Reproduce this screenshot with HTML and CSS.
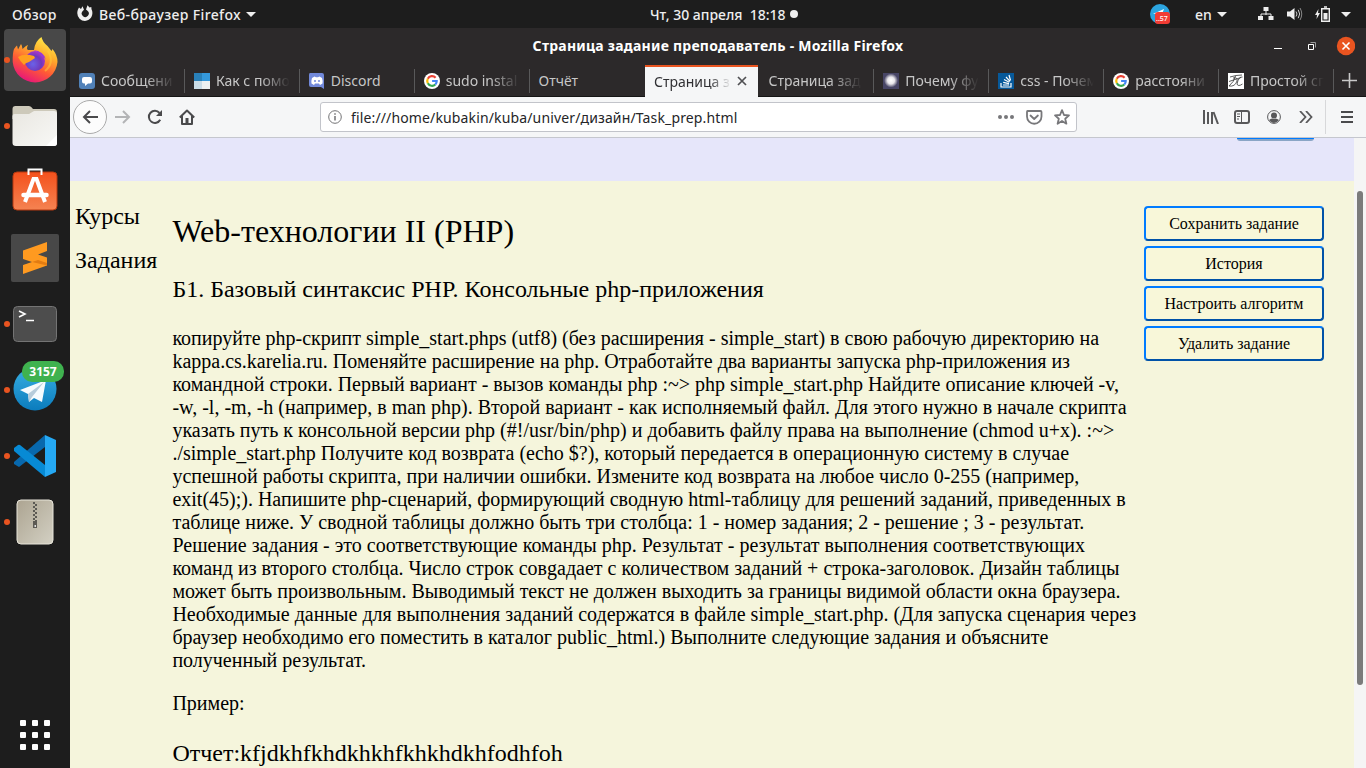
FILE: index.html
```html
<!DOCTYPE html>
<html lang="ru">
<head>
<meta charset="utf-8">
<title>Страница задание преподаватель</title>
<link rel="stylesheet" href="styles.css">
</head>
<body>
<svg width="0" height="0" class="defs">
  <defs>
    <linearGradient id="fox" x1=".8" y1="0" x2=".3" y2="1"><stop offset="0" stop-color="#fff44f"/><stop offset=".35" stop-color="#ffae2b"/><stop offset=".65" stop-color="#ff5a35"/><stop offset="1" stop-color="#e5127e"/></linearGradient>
    <radialGradient id="globe" cx=".4" cy=".65" r=".7"><stop offset="0" stop-color="#6a62e8"/><stop offset=".6" stop-color="#7038bb"/><stop offset="1" stop-color="#b934c9"/></radialGradient>
    <linearGradient id="paper" x1="0" y1="0" x2="1" y2="1"><stop offset="0" stop-color="#e9e7e1"/><stop offset="1" stop-color="#f8f8f6"/></linearGradient>
    <linearGradient id="orange" x1="0" y1="0" x2="0" y2="1"><stop offset="0" stop-color="#f4511c"/><stop offset="1" stop-color="#f58352"/></linearGradient>
    <linearGradient id="tg" x1="0" y1="0" x2="0" y2="1"><stop offset="0" stop-color="#37aee2"/><stop offset="1" stop-color="#0b7cbd"/></linearGradient>
    <linearGradient id="zip" x1="0" y1="0" x2="1" y2="1"><stop offset="0" stop-color="#aca491"/><stop offset="1" stop-color="#d3d0c3"/></linearGradient>
    <radialGradient id="star"><stop offset="0" stop-color="#fff"/><stop offset=".5" stop-color="#e8e6ea"/><stop offset="1" stop-color="#474565"/></radialGradient>
    <symbol id="google" viewBox="0 0 16 16"><circle cx="8" cy="8" r="8" fill="#fff"/><g fill="none" stroke-width="2.2"><path d="M11.6 4.7A4.8 4.8 0 0 0 3.8 5.7" stroke="#ea4335"/><path d="M3.8 5.7a4.8 4.8 0 0 0 0 4.6" stroke="#fbbc05"/><path d="M3.8 10.3a4.8 4.8 0 0 0 7.5 1.2" stroke="#34a853"/><path d="M11.3 11.5A4.7 4.7 0 0 0 12.7 8H8.1" stroke="#4285f4"/></g></symbol>
  </defs>
</svg>
<div class="desktop">
  <header class="topbar">
    <span class="overview">Обзор</span>
    <svg class="fox-mono" width="16" height="16" viewBox="0 0 16 16"><path d="M2 2.500 4 4l1.500-2.700L7 4.800 5.500 6.300a3.500 3.500 0 1 0 5-.5L9 4.500 10.500.2l2 2.200 1.800-.5.2 2.400A8 8 0 0 1 8 16 7.800 7.800 0 0 1 .3 8.300C.2 6 1 4.300 2 2.500z" fill="#eee"/></svg>
    <span class="app">Веб-браузер Firefox</span><i class="tri"></i>
    <span class="clock">Чт, 30 апреля&nbsp; 18:18</span><i class="dot"></i>
    <div class="tray">
      <svg width="22" height="22" viewBox="0 0 22 22"><circle cx="11" cy="11" r="10" fill="#2ca5e0"/><path d="m4 11 11-5-2 5z" fill="#fff"/><rect x="6" y="9" width="15" height="12" rx="3" fill="#f23c34"/><text x="7" y="18" font-size="7" fill="#fff">..57</text></svg>
      <span class="lang">en</span><i class="tri"></i>
      <svg class="net" width="16" height="14" viewBox="0 0 16 14"><path d="M8 4v4M3 10V7h10v3" fill="none" stroke="#eee"/><path d="M5.500 0h5v4h-5zM0 9h5v4H0zM10.500 9h5v4h-5z" fill="#eee"/></svg>
      <svg class="vol" width="16" height="14" viewBox="0 0 16 14"><path d="M0 4.500h3L7.500 1v12L3 9.500H0z" fill="#eee"/><path d="M9 4.500q2 2.500 0 5M11.200 2.800q3 4.200 0 8.400" fill="none" stroke="#ccc"/><path d="M13 1q3.500 6 0 12" fill="none" stroke="#888"/></svg>
      <svg class="bat" width="16" height="16" viewBox="0 0 16 16"><path d="M3.500 3 0 9h2L1.500 13 5 7H3z" fill="#eee"/><path d="M6.700 2.700h7.600v12.600H6.700zM9 1h3" fill="none" stroke="#eee" stroke-width="1.400"/><path d="M8.500 7h4v6.500h-4z" fill="#eee"/></svg>
      <i class="tri last"></i>
    </div>
  </header>

  <aside class="dock">
    <div class="tile active run"><svg width="46" height="48" viewBox="0 0 46 48"><path d="M2 13q2-3 3-3.500l1 4 3-5.500q1 1 1.500 5Q14 9.500 16 9q-2 4 0 5h6Q23 5 29.500 1q1 5 6 9l4 5 1-2q5 6 5 13A22.500 22.500 0 0 1 .7 26Q.5 17 2 13z" fill="url(#fox)"/><circle cx="23" cy="25" r="10" fill="url(#globe)"/><path d="M6 21q6-4 16-1l1 2-6 4q-4 1-5 3-4-4-6-8z" fill="#ffa01f"/><path d="M21 14q11 1 13 10-1-3-5-4 0-3-8-6z" fill="#9a39d4"/><path d="M36 15q7 12-3 20" fill="none" stroke="#ffd03a" stroke-width="2" opacity=".5"/></svg></div>
    <div class="tile run"><svg width="46" height="42" viewBox="0 0 46 42"><path d="M.5 14V4q0-3 3-3H17q2 0 4 3h21q3 0 3 3v8z" fill="#cdc9ba"/><path d="M.5 11q0-2 2-2H17l5-3h20q3 0 3 3v29q0 3-3 3H4q-3.500 0-3.500-3z" fill="url(#paper)"/><path d="m34 41 11-11v8q0 3-3 3z" fill="#fff"/></svg></div>
    <div class="tile store"><svg width="46" height="44" viewBox="0 0 46 44"><rect x="1" y="4" width="44" height="38" rx="4" fill="url(#orange)" stroke="#b63910"/><path d="M16.500 7V1.500h13V7" fill="none" stroke="#fff" stroke-width="2"/><path d="M13 34 21.500 11h3L33 34" fill="none" stroke="#fff" stroke-width="4"/><path d="M11.500 27h23" stroke="#fff" stroke-width="4.500" stroke-linecap="round"/></svg></div>
    <div class="tile"><svg width="48" height="48" viewBox="0 0 48 48"><rect width="48" height="48" rx="2" fill="#484848"/><path d="M12 16.500 36 8v9l-9 3.500 9 3v8L12 40v-9l9-3-9-3z" fill="#ff9a20"/><path d="m21 28 6-2 9 3v2.500z" fill="#e27c12"/></svg></div>
    <div class="tile run"><svg width="44" height="36" viewBox="0 0 44 36"><rect x=".5" y=".5" width="43" height="35" rx="4" fill="#4d4d4d" stroke="#747474"/><path d="m6 5 6 3-6 3M13 14.500h8" fill="none" stroke="#fff" stroke-width="1.600"/></svg></div>
    <div class="tile run"><svg width="44" height="44" viewBox="0 0 44 44"><circle cx="22" cy="21" r="21.500" fill="url(#tg)"/><path d="m7 22 26-10-4 22-8-4-5 4-1-8z" fill="#f6fbfe"/><path d="m15 26 16-12-12 15-3 5z" fill="#b7ccdb"/></svg><b class="badge">3157</b></div>
    <div class="tile run"><svg width="42" height="42" viewBox="0 0 42 42"><path d="M0 27 31 0v12L5 32 0 29z" fill="#0868ad"/><path d="m0 13 4-3q1-.5 2 0l25 20v12L0 16z" fill="#078ad5"/><path d="m31 0 11 5v32l-11 5z" fill="#25a9f4"/></svg></div>
    <div class="tile run"><svg width="38" height="46" viewBox="0 0 38 46"><rect x="1" y="1" width="36" height="44" rx="4" fill="url(#zip)" stroke="#e8e5da"/><path d="M18 3v18" stroke="#5c5a54" stroke-width="2" stroke-dasharray="2 2"/><path d="M20 5v18" stroke="#5c5a54" stroke-width="2" stroke-dasharray="2 2"/><path d="M17 22h4v7h-4z" fill="#5c5a54"/><path d="M18.500 26h1.500v2h-1.500z" fill="#ddd"/></svg></div>
    <div class="apps"><i></i><i></i><i></i><i></i><i></i><i></i><i></i><i></i><i></i></div>
  </aside>

  <main class="window">
    <div class="titlebar"><b>Страница задание преподаватель - Mozilla Firefox</b>
      <svg class="controls" width="84" height="20" viewBox="0 0 84 20"><path d="M3 12.500h8" stroke="#fff"/><path d="M37.500 8.500h5v5h-5z" fill="none" stroke="#fff"/><path d="M39.500 6.500h5v5" fill="none" stroke="#999"/><circle cx="75" cy="10" r="9.200" fill="#e95420"/><path d="m71.500 6.500 7 7m0-7-7 7" stroke="#fff" stroke-width="1.600"/></svg>
    </div>
    <nav class="tabs">
      <div class="tab"><svg width="16" height="16"><rect width="16" height="16" rx="3" fill="#5181b8"/><path d="M5 4h6q2 0 2 2v2.500q0 2-2 2H9L6 13v-2.500H5q-2 0-2-2V6q0-2 2-2z" fill="#fff"/></svg><span>Сообщени</span></div>
      <div class="tab"><svg width="16" height="16"><path d="M0 0h8v8H0z" fill="#2980b9"/><path d="M8 0h8v8H8z" fill="#3498db"/><path d="M0 8h8v8H0z" fill="#c9dce7"/><path d="M8 8h8v8H8z" fill="#ecf0f1"/></svg><span>Как с помо</span></div>
      <div class="tab"><svg width="16" height="16"><path d="M1 0h12q2 0 2 2v14l-3-2H2q-2 0-2-2V2q0-2 1-2z" fill="#7289da"/><path d="m3 5 2.500-1.500L7 4.200h2l1.500-.7L13 5q1 3 .5 5.500L11 12l-1-1.500H6L5 12l-2.500-1.500Q2 8 3 5z" fill="#fff"/><circle cx="6" cy="8" r="1" fill="#7289da"/><circle cx="10" cy="8" r="1" fill="#7289da"/></svg><span class="full">Discord</span></div>
      <div class="tab"><svg width="16" height="16"><use href="#google"/></svg><span>sudo instal</span></div>
      <div class="tab nosep"><span class="full">Отчёт</span></div>
      <div class="tab selected"><span>Страница з</span><svg class="close" width="10" height="10"><path d="m1 1 8 8m0-8-8 8" stroke="#505053" stroke-width="1.700"/></svg></div>
      <div class="tab"><span class="late">Страница зад</span></div>
      <div class="tab"><svg width="16" height="16"><path d="M0 0h16v16H0z" fill="#474565"/><circle cx="8" cy="7.500" r="7" fill="url(#star)"/></svg><span>Почему фу</span></div>
      <div class="tab"><svg width="16" height="16"><path d="M0 0h16v16H0z" fill="#07599a"/><path d="M3 10v4h10v-4M5 12h6M5.200 9.400l5.800 1.200M6 6.500l5.300 2.700M8 4l4 4.300M11 2l1.500 5.500" fill="none" stroke="#fff" stroke-width="1.200"/></svg><span>css - Почем</span></div>
      <div class="tab"><svg width="16" height="16"><use href="#google"/></svg><span>расстояни</span></div>
      <div class="tab"><svg width="16" height="16"><path d="M0 0h16v16H0z" fill="#fff"/><path d="M2 4q6-2 12-2M7.500 3Q6 9 1 13q6 1 8-5 1-4-4-3M14.500 4q-4-.5-5.500 7 1 3 5.500 0M1 8.500l12-4" fill="none" stroke="#333" stroke-width=".8"/></svg><span>Простой сп</span></div>
      <svg class="plus" width="15" height="15"><path d="M7.500 0v15M0 7.500h15" stroke="#c9c9c9" stroke-width="1.600"/></svg>
    </nav>
    <div class="toolbar">
      <span class="back"><svg width="16" height="14"><path d="M16 7H2m6-6L2 7l6 6" fill="none" stroke="#4a4a4c" stroke-width="2"/></svg></span>
      <svg class="fwd" width="16" height="14"><path d="M0 7h14M8 1l6 6-6 6" fill="none" stroke="#b3b4b6" stroke-width="2"/></svg>
      <svg class="reload" width="16" height="16"><path d="M13.200 10.700A6 6 0 1 1 12.500 4" fill="none" stroke="#4a4a4c" stroke-width="2"/><path d="M15 1v6H9z" fill="#4a4a4c"/></svg>
      <svg class="home" width="16" height="16"><path d="m.8 8.500 7.200-7 7.200 7M3 7v8h10V7" fill="none" stroke="#4a4a4c" stroke-width="2" stroke-linejoin="round"/><path d="M6.500 9h3v6h-3z" fill="#4a4a4c"/></svg>
      <div class="url">
        <svg width="14" height="14"><circle cx="7" cy="7" r="6.300" fill="none" stroke="#737375"/><path d="M7 6v4.500M7 3.300v1.500" stroke="#737375" stroke-width="1.500"/></svg>
        <span class="address">file:///home/kubakin/kuba/univer/дизайн/Task_prep.html</span>
        <svg class="page-actions" width="72" height="16"><g fill="#77777a"><circle cx="2" cy="8" r="2"/><circle cx="8" cy="8" r="2"/><circle cx="14" cy="8" r="2"/></g><g fill="none" stroke="#77777a" stroke-width="1.800" stroke-linejoin="round"><path d="M29.500 2h13q1 0 1 1v4.500a7 7 0 0 1-14.500 0V3q0-1 .5-1z"/><path d="m32.500 6.500 3.700 3.500 3.700-3.500" stroke-linecap="round"/><path d="m64 1.200 2 4.800 5 .4-3.800 3.300 1.200 5-4.400-2.700-4.400 2.700 1.200-5L57 6.400l5-.4z"/></g></svg>
      </div>
      <svg class="lib" width="16" height="14"><path d="M1 0v14M5 2v12M9 2v12M10.500 2l4.500 12" stroke="#58585a" stroke-width="2"/></svg>
      <svg class="side" width="16" height="14"><rect x="1" y="1" width="14" height="12" rx="2" fill="none" stroke="#58585a" stroke-width="2"/><path d="M7.500 1v12M3 4h3M3 6.500h3M3 9h2" stroke="#58585a"/></svg>
      <svg class="user" width="14" height="14"><circle cx="7" cy="7" r="6.400" fill="none" stroke="#58585a"/><circle cx="7" cy="5.400" r="3" fill="#58585a"/><path d="M2 10Q5 7.500 7 9q2-1.500 5 1Q7 16 2 10z" fill="#58585a"/></svg>
      <svg class="more" width="14" height="12"><path d="m1 0 5.500 6L1 12M7 0l5.500 6L7 12" fill="none" stroke="#58585a" stroke-width="1.800"/></svg>
      <span class="menu"><svg width="12" height="12"><path d="M0 1h12M0 6h12M0 11h12" stroke="#4a4a4c" stroke-width="1.800"/></svg></span>
    </div>
    <div class="viewport">
      <div class="page">
        <div class="banner"><span></span></div>
        <div class="content">
          <div class="links"><p>Курсы</p><p>Задания</p></div>
          <article>
            <h1>Web-технологии II (PHP)</h1>
            <h2>Б1. Базовый синтаксис PHP. Консольные php-приложения</h2>
            <p class="task">копируйте php-скрипт simple_start.phps (utf8) (без расширения - simple_start) в свою рабочую директорию на<br>kappa.cs.karelia.ru. Поменяйте расширение на php. Отработайте два варианты запуска php-приложения из<br>командной строки. Первый вариант - вызов команды php :~&gt; php simple_start.php Найдите описание ключей -v,<br>-w, -l, -m, -h (например, в man php). Второй вариант - как исполняемый файл. Для этого нужно в начале скрипта<br>указать путь к консольной версии php (#!/usr/bin/php) и добавить файлу права на выполнение (chmod u+x). :~&gt;<br>./simple_start.php Получите код возврата (echo $?), который передается в операционную систему в случае<br>успешной работы скрипта, при наличии ошибки. Измените код возврата на любое число 0-255 (например,<br>exit(45);). Напишите php-сценарий, формирующий сводную html-таблицу для решений заданий, приведенных в<br>таблице ниже. У сводной таблицы должно быть три столбца: 1 - номер задания; 2 - решение ; 3 - результат.<br>Решение задания - это соответствующие команды php. Результат - результат выполнения соответствующих<br>команд из второго столбца. Число строк совgадает с количеством заданий + строка-заголовок. Дизайн таблицы<br>может быть произвольным. Выводимый текст не должен выходить за границы видимой области окна браузера.<br>Необходимые данные для выполнения заданий содержатся в файле simple_start.php. (Для запуска сценария через<br>браузер необходимо его поместить в каталог public_html.) Выполните следующие задания и объясните<br>полученный результат.</p>
            <p class="example">Пример:</p>
            <p class="report">Отчет:kfjdkhfkhdkhkhfkhkhdkhfodhfoh</p>
          </article>
          <div class="buttons"><button>Сохранить задание</button><button>История</button><button>Настроить алгоритм</button><button>Удалить задание</button></div>
        </div>
      </div>
      <div class="scroll"><i></i></div>
    </div>
  </main>
</div>
</body>
</html>
```
FILE: styles.css
```css
* { box-sizing: border-box; }
body { margin: 0; overflow: hidden; font-family: "Noto Sans", "Open Sans", sans-serif; font-size: 14px; }
svg { display: block; flex: none; }
.defs { position: absolute; }
.desktop { width: 1366px; height: 768px; display: grid; grid-template: 28px 740px / 70px 1296px; background: #1d1d1d; }
.topbar { grid-column: 1 / 3; display: flex; align-items: center; color: #eee; white-space: nowrap; font-size: 14px; font-weight: 500; height: 28px; }
.overview { width: 64px; padding-left: 12px; letter-spacing: .3px; }
.fox-mono { margin: 0 6px 2px 13px; }
.app { width: 142px; letter-spacing: .37px; }
.tri { width: 0; height: 0; border: 5px solid transparent; border-top-color: #eee; border-bottom: 0; margin-left: 5px; flex: none; }
.clock { margin-left: 394px; width: 137px; }
.dot { width: 8px; height: 8px; border-radius: 50%; background: #eee; margin-left: 3px; }
.tray { display: flex; align-items: center; margin-left: auto; padding-right: 15px; }
.lang { margin-left: 24px; width: 17px; }
.net { margin-left: 31px; }
.vol { margin-left: 13px; }
.bat { margin-left: 12px; }
.tri.last { margin-left: 10px; }

.dock { display: flex; flex-direction: column; align-items: center; padding-top: 1px; gap: 4px; height: 740px; }
.tile { position: relative; width: 62px; height: 62px; border-radius: 4px; display: flex; align-items: center; justify-content: center; flex: none; }
.tile.active { background: #484848; }
.tile.store { padding-bottom: 4px; }
.run::before { content: ""; position: absolute; left: 0; top: 28px; width: 6px; height: 6px; border-radius: 50%; background: #e95420; }
.badge { position: absolute; left: 18px; top: 2px; width: 42px; height: 21px; border-radius: 10px; background: #3fb24f; color: #fff; font-size: 12px; line-height: 21px; text-align: center; }
.apps { display: grid; grid-template-columns: repeat(3, 6px); gap: 6px; margin-top: auto; margin-bottom: 18px; }
.apps i { width: 6px; height: 6px; border-radius: 1px; background: #fff; }

.window { height: 740px; display: flex; flex-direction: column; background: #2c292a; }
.titlebar { height: 37px; padding-bottom: 2px; position: relative; display: flex; justify-content: center; align-items: center; color: #fff; font-size: 14px; letter-spacing: .24px; }
.controls { position: absolute; right: 11px; top: 8px; }
.tabs { height: 32px; display: flex; color: #c7c7c7; border-bottom: 1px solid #151515; flex: none; }
.tab { width: 114.9px; height: 32px; padding: 0 9px 1px; display: flex; align-items: center; gap: 6px; position: relative; flex: none; }
.tab::after { content: ""; position: absolute; right: 0; top: 4px; width: 1px; height: 24px; background: #59595a; }
.nosep::after, .selected::after { display: none; }
.tab span { width: 74px; flex: none; white-space: nowrap; mask-image: linear-gradient(to right, #000 60%, transparent); }
.tab span.late { width: 94px; mask-image: linear-gradient(to right, #000 65%, transparent); }
.tab span.full { mask-image: none; }
.selected { background: #f5f6f7; color: #303033; border-top: 2px solid #e95420; margin-left: .5px; padding-bottom: 2px; width: 113.5px; margin-right: 1px; }
.tab.selected span { width: 77px; mask-image: linear-gradient(to right, #000 72%, transparent); }
.plus { margin: 8px 0 0 8px; }
.toolbar { height: 41px; background: #f5f6f7; border-bottom: 1px solid #c5c7ce; display: flex; align-items: center; flex: none; }
.back { width: 34px; height: 34px; margin-left: 3px; border: 1px solid #aaa; border-radius: 50%; background: #fcfcfc; display: flex; align-items: center; justify-content: center; }
.fwd { margin-left: 8px; }
.reload { margin-left: 16px; }
.home { margin-left: 16px; }
.url { width: 757px; height: 30px; margin-left: 125px; border: 1px solid #c2c4ca; border-radius: 3px; background: #fff; display: flex; align-items: center; padding: 0 6px 0 7px; color: #252528; }
.address { margin-left: 9px; white-space: nowrap; letter-spacing: .14px; }
.page-actions { margin-left: auto; }
.lib { margin-left: 126px; }
.side { margin-left: 15px; }
.user { margin-left: 17px; }
.more { margin-left: 18px; }
.menu { margin-left: 12px; height: 34px; padding-left: 15px; border-left: 1px solid #d7d8da; display: flex; align-items: center; }

.viewport { height: 630px; display: flex; overflow: hidden; }
.page { width: 1284px; height: 630px; overflow: hidden; background: #f5f5dc; color: #000; font-family: "Liberation Serif", serif; }
.banner { height: 43px; background: #e6e6fa; padding-left: 1167px; }
.banner span { display: block; width: 77px; height: 3px; background: #8aa5c5; border-top: 1px solid #007bff; border-radius: 0 0 4px 4px; }
.content { display: grid; grid-template-columns: 102.4px 971.6px 180px; }
.links { padding: 22px 0 0 5px; font-size: 24px; line-height: 27px; }
.links p { margin: 0 0 17px; }
article { padding-top: 32px; white-space: nowrap; }
h1 { margin: 0; font-size: 32px; font-weight: 400; line-height: 37px; }
h2 { margin: 26px 0 0; font-size: 24px; font-weight: 400; line-height: 27px; }
article p { margin: 0; font-size: 20px; line-height: 23px; }
article .task { margin-top: 24px; }
article .example { margin-top: 20px; }
article .report { margin-top: 25px; font-size: 24px; line-height: 27px; }
.buttons { display: flex; flex-direction: column; gap: 5px; padding-top: 25px; }
button { height: 35px; padding: 0; font: 16px "Liberation Serif", serif; color: #000; background: #f8f7d9; border: 2px solid #007bff; border-right-color: #0052a8; border-bottom-color: #0052a8; border-radius: 4px; }
.scroll { width: 12px; background: #f5f5f5; padding: 53px 3px 0; }
.scroll i { display: block; width: 6px; height: 494px; border-radius: 3px; background: #7b7b7b; }
```
